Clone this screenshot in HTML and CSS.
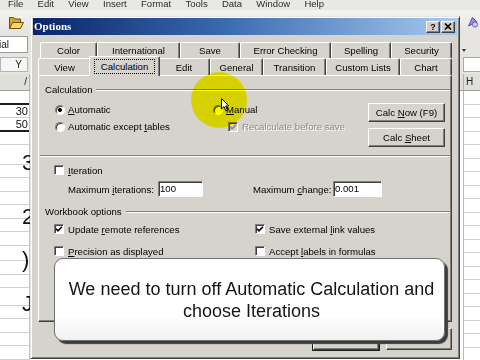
FILE: index.html
```html
<!DOCTYPE html>
<html lang="en">
<head>
<meta charset="utf-8">
<title>Options</title>
<link rel="stylesheet" href="styles.css">
</head>
<body>
<div class="screen">
  <div class="excel">
    <div class="menubar"><span>File</span><span>Edit</span><span>View</span><span>Insert</span><span>Format</span><span>Tools</span><span>Data</span><span>Window</span><span>Help</span></div>
    <div class="toolbar">
      <svg class="folder" width="17" height="16" viewBox="0 0 17 16">
        <path d="M1.5 3.5h4l1 1.5h6v9.5h-11z" fill="#d8a526" stroke="#6b4e0c"/>
        <path d="M1.5 14.5l3-6h11l-3 6z" fill="#f7d75e" stroke="#6b4e0c" stroke-linejoin="round"/>
        <path d="M10.5 1.5l1.5 1.5 3-2" fill="none" stroke="#fff6c0" stroke-width="1.4"/>
      </svg>
      <svg class="tb-icon" width="12" height="12" viewBox="0 0 12 12">
        <path d="M1.5 10 L5.5 1.5 L10 6 Z" fill="#9b8fe0" stroke="#5a4caa"/>
        <circle cx="8" cy="8.5" r="2.6" fill="#cfc6f6" stroke="#6a5cc0"/>
      </svg>
    </div>
    <div class="fmtbar"><div class="fontbox">Arial</div><div class="drop"></div></div>
    <div class="formulabar"><div class="namebox">Y</div><div class="fx"></div></div>
    <div class="colhead"><div class="ch-left">/</div><div class="ch-right">H</div></div>
    <div class="sheet">
      <div class="col-left">
        <div class="cell thick"></div>
        <div class="cell num">30</div>
        <div class="cell num thick">50</div>
        <div class="cell"></div>
        <div class="cell"><span class="big g3">3</span></div>
        <div class="cell"></div>
        <div class="cell"></div>
        <div class="cell"></div>
        <div class="cell"><span class="big g2">2</span></div>
        <div class="cell"></div>
        <div class="cell"></div>
        <div class="cell"><span class="big gp">)</span></div>
        <div class="cell"></div>
        <div class="cell"></div>
        <div class="cell"><span class="big gj">J</span></div>
        <div class="cell"></div>
        <div class="cell"></div>
        <div class="cell"></div>
        <div class="cell"></div>
        <div class="cell"></div>
      </div>
      <div class="col-right"></div>
    </div>
  </div>

  <div class="dialog">
    <div class="titlebar">
      <span class="title">Options</span>
      <span class="tbtn help">?</span>
      <span class="tbtn close"><svg width="8" height="7" viewBox="0 0 8 7"><path d="M1 0.5L7 6.5M7 0.5L1 6.5" stroke="#000" stroke-width="1.6"/></svg></span>
    </div>
    <div class="body">
      <div class="tabrow back">
        <div class="tab">Color</div>
        <div class="tab">International</div>
        <div class="tab">Save</div>
        <div class="tab">Error Checking</div>
        <div class="tab">Spelling</div>
        <div class="tab">Security</div>
      </div>
      <div class="tabrow front">
        <div class="tab">View</div>
        <div class="tab sel"><span class="focus">Calculation</span></div>
        <div class="tab">Edit</div>
        <div class="tab">General</div>
        <div class="tab">Transition</div>
        <div class="tab">Custom Lists</div>
        <div class="tab">Chart</div>
      </div>
      <div class="panel">
        <div class="group"><span>Calculation</span><i class="groove"></i></div>
        <div class="calc">
          <div class="calc-opts">
            <div class="opt"><span class="radio on"></span><span><u>A</u>utomatic</span></div>
            <div class="opt"><span class="radio"></span><span><u>M</u>anual</span></div>
            <div class="opt"><span class="radio"></span><span>Automatic except <u>t</u>ables</span></div>
            <div class="opt sub"><span class="chk dis"><svg width="8" height="8" viewBox="0 0 8 8"><path d="M1 3.8L3 5.8L7 1.8" fill="none" stroke="#8a8a8a" stroke-width="1.6"/></svg></span><span class="disabled">Recalculate before save</span></div>
          </div>
          <div class="calc-btns">
            <div class="btn"><span>Calc <u>N</u>ow (F9)</span></div>
            <div class="btn"><span>Calc <u>S</u>heet</span></div>
          </div>
        </div>
        <div class="sep"></div>
        <div class="row-chk"><span class="chk"></span><span><u>I</u>teration</span></div>
        <div class="maxrow">
          <span class="lbl1">Maximum <u>i</u>terations:</span>
          <span class="field f1">100</span>
          <span class="lbl2">Maximum <u>c</u>hange:</span>
          <span class="field f2">0.001</span>
        </div>
        <div class="group wbg"><span>Workbook options</span><i class="groove"></i></div>
        <div class="wb">
          <div class="opt"><span class="chk"><svg width="8" height="8" viewBox="0 0 8 8"><path d="M1 3.8L3 5.8L7 1.8" fill="none" stroke="#000" stroke-width="1.6"/></svg></span><span>Update <u>r</u>emote references</span></div>
          <div class="opt"><span class="chk"><svg width="8" height="8" viewBox="0 0 8 8"><path d="M1 3.8L3 5.8L7 1.8" fill="none" stroke="#000" stroke-width="1.6"/></svg></span><span>Save external <u>l</u>ink values</span></div>
          <div class="opt"><span class="chk"></span><span><u>P</u>recision as displayed</span></div>
          <div class="opt"><span class="chk"></span><span>Accept <u>l</u>abels in formulas</span></div>
        </div>
      </div>
      <div class="footer">
        <div class="btn big-btn default"><span>OK</span></div>
        <div class="btn big-btn"><span>Cancel</span></div>
      </div>
    </div>
  </div>

  <div class="highlight"></div>
  <svg class="cursor" width="9" height="14" viewBox="0 0 9 14">
    <path d="M0.5 0.5 L0.5 11 L3 8.6 L4.8 12.8 L6.4 12.1 L4.6 8 L7.8 8 Z" fill="#fff" stroke="#000" stroke-width="1" stroke-linejoin="round"/>
  </svg>
  <div class="callout">We need to turn off Automatic Calculation and<br>choose Iterations</div>
</div>
</body>
</html>
```

FILE: styles.css
```css
* { box-sizing: border-box; }
html, body { margin: 0; padding: 0; }
body {
  width: 480px;
  height: 360px;
  overflow: hidden;
  background: #d6d3cd;
  font-family: "Liberation Sans", Arial, sans-serif;
}
.screen { position: relative; width: 480px; height: 360px; overflow: hidden; }

/* ---------- Excel background ---------- */
.excel { display: flex; flex-direction: column; width: 480px; height: 360px; background: #ecebe8; }
.menubar {
  flex: none; height: 10px; display: flex; gap: 14.3px; padding: 0 8px;
  background: #e9e8e5; color: #2a2a2a; font-size: 9.5px; line-height: 11px; overflow: hidden;
}
.menubar span { margin-top: -2px; }
.toolbar {
  flex: none; height: 23px; display: flex; align-items: center; justify-content: space-between;
  padding: 0 1px 0 8px; background: linear-gradient(#f3f3f1, #e5e4e0);
}
.fmtbar { flex: none; height: 22px; display: flex; align-items: center; justify-content: space-between; background: #e6e5e1; }
.fontbox {
  margin-left: -14px; width: 42px; height: 17px; background: #fff; border: 1px solid #9a9a9a;
  padding-left: 2px; font-size: 10px; line-height: 15px; color: #222;
}
.drop {
  width: 0; height: 0; border-left: 2px solid transparent; border-right: 2px solid transparent;
  border-top: 3px solid #333; margin: 12px 14px 0 0;
}
.formulabar { flex: none; height: 19px; display: flex; align-items: center; justify-content: space-between; background: #e6e5e1; }
.namebox {
  width: 28px; height: 15px; background: #f6f6f6; border: 1px solid #b4b4b4; text-align: right;
  padding-right: 5px; font-size: 10px; line-height: 13px; color: #222;
}
.fx { width: 17px; height: 15px; background: #fff; border: 1px solid #a8a8a8; border-right: none; }
.colhead {
  flex: none; height: 17px; display: flex; justify-content: space-between; background: #e0dfdb;
  border-bottom: 1px solid #a0a0a0; font-size: 10px; line-height: 16px; color: #222;
}
.ch-left { width: 30px; text-align: right; padding-right: 2px; border-right: 1px solid #b0b0b0; }
.ch-right { width: 17px; padding-left: 2px; border-left: 1px solid #b0b0b0; }
.sheet { flex: 1; display: flex; justify-content: space-between; background: #fff; }
.col-left { width: 30px; border-right: 1px solid #c4c4c4; }
.cell {
  height: 13.5px; border-bottom: 1px solid #d0d0d0; font-size: 11px; line-height: 13px;
  color: #111; white-space: nowrap;
}
.cell.num { text-align: right; padding-right: 1px; }
.cell.thick { border-bottom: 2px solid #1c1c1c; }
.big { display: block; margin-left: 22px; font-size: 22px; line-height: 24px; color: #111; }
.g3 { margin-top: 6px; }
.g2 { margin-top: 0; }
.gp { margin-top: 2px; }
.gj { margin-top: 4px; }
.col-right {
  width: 17px; border-left: 1px solid #b8b8b8;
  background: repeating-linear-gradient(to bottom, #fff 0 12.5px, #d0d0d0 12.5px 13.5px);
}

/* ---------- Dialog window ---------- */
.dialog {
  position: absolute; left: 30px; top: 16px; width: 430px; height: 343px;
  background: #d6d3cd;
  border: 1px solid; border-color: #e8e6e2 #404040 #404040 #e8e6e2;
  box-shadow: inset 1px 1px #fff, inset -1px -1px #808080;
  padding: 1px 2px 2px 2px;
  display: flex; flex-direction: column;
  font-size: 9.6px; line-height: 11px; color: #000;
}
.titlebar {
  flex: none; height: 17px; display: flex; align-items: center; padding: 0 2px 0 1px;
  background: linear-gradient(to right, #0a246a, #3a6ab0 45%, #a6caf0);
}
.title { flex: 1; color: #fff; font: bold 11px/17px "Liberation Serif", "Times New Roman", serif; }
.tbtn {
  width: 14px; height: 12px; background: #d4d0c8;
  border: 1px solid; border-color: #fff #404040 #404040 #fff; box-shadow: inset -1px -1px #808080;
  display: flex; align-items: center; justify-content: center;
  font: bold 9px/10px "Liberation Sans", Arial, sans-serif; color: #000;
}
.tbtn.help { margin-right: 1px; }

.body { flex: 1; display: flex; flex-direction: column; padding: 7px 5px 0 5px; }
.tabrow { display: grid; }
.tabrow.back { height: 16px; margin-left: 2px; grid-template-columns: 57px 83px 60px 91px 60px 61px; }
.tabrow.front { height: 17px; grid-template-columns: 53px 67px 52px 53px 63px 74px 52px; }
.tab {
  display: flex; align-items: center; justify-content: center; white-space: nowrap;
  background: #d6d3cd;
  border-left: 1px solid #fff; border-top: 1px solid #fff; border-right: 1px solid #404040;
  box-shadow: inset -1px 0 #808080; border-radius: 2px 2px 0 0;
}
.tab.sel { margin: -2px -2px -1px; position: relative; z-index: 1; }
.focus { outline: 1px dotted #000; padding: 1px 6px; }

.panel {
  flex: none; height: 247px; padding: 0 1px;
  border: 1px solid; border-color: #fff #404040 #404040 #fff; box-shadow: inset -1px -1px #808080;
  display: flex; flex-direction: column;
}
.group { display: flex; align-items: center; height: 11px; margin-top: 8px; padding-left: 5px; white-space: nowrap; }
.group.wbg { margin-top: 9px; }
.groove { flex: 1; height: 2px; margin-left: 4px; border-top: 1px solid #808080; border-bottom: 1px solid #fff; }

.calc { display: flex; padding-top: 6px; }
.calc-opts { display: grid; grid-template-columns: 158px 155px; grid-auto-rows: 17px; padding-left: 15px; align-content: start; }
.opt { display: flex; align-items: center; white-space: nowrap; }
.opt.sub { padding-left: 15px; }
.radio {
  flex: none; width: 10px; height: 10px; margin-right: 3px; border-radius: 50%;
  border: 1px solid; border-color: #808080 #fff #fff #808080; box-shadow: inset 1px 1px #404040;
  background: #fff;
}
.radio.on { background: radial-gradient(circle, #000 0 1.7px, #fff 2.3px); }
.chk {
  flex: none; width: 10px; height: 10px; margin-right: 4px;
  border: 1px solid; border-color: #808080 #fff #fff #808080; box-shadow: inset 1px 1px #404040;
  background: #fff; display: flex; align-items: center; justify-content: center;
}
.chk.dis { background: #d6d3cd; }
.disabled { color: #8a8a8a; text-shadow: 1px 1px 0 #fff; }

.calc-btns { display: flex; flex-direction: column; gap: 6px; margin-top: 2px; }
.btn {
  display: flex; align-items: center; justify-content: center; white-space: nowrap;
  width: 77px; height: 19px; background: #d6d3cd;
  border: 1px solid; border-color: #fff #404040 #404040 #fff; box-shadow: inset -1px -1px #808080;
}
.sep { margin-top: 8px; height: 2px; border-top: 1px solid #808080; border-bottom: 1px solid #fff; }
.row-chk { display: flex; align-items: center; height: 14px; margin-top: 6px; padding-left: 14px; }
.maxrow { display: flex; align-items: center; height: 16px; margin-top: 4px; padding-left: 28px; white-space: nowrap; }
.lbl1 { width: 90px; }
.lbl2 { width: 80px; margin-left: 50px; }
.field {
  height: 16px; background: #fff; padding-left: 1px; line-height: 14px;
  border: 1px solid; border-color: #808080 #fff #fff #808080; box-shadow: inset 1px 1px #404040;
}
.f1 { width: 45px; }
.f2 { width: 49px; }
.wb { display: grid; grid-template-columns: 201px 1fr; grid-auto-rows: 14px; row-gap: 8px; margin-top: 5px; padding-left: 14px; }

.footer { display: flex; justify-content: flex-end; gap: 7px; margin-top: 6px; }
.big-btn { width: 66px; height: 22px; }
.default { outline: 1px solid #202020; }

/* ---------- Overlays ---------- */
.highlight {
  position: absolute; left: 191px; top: 72px; width: 56px; height: 56px; border-radius: 50%;
  mix-blend-mode: multiply;
  background: radial-gradient(circle, rgb(255,252,0) 0 64%, rgba(255,252,0,0.8) 84%, rgba(255,252,0,0) 100%);
}
.cursor { position: absolute; left: 221px; top: 98px; }
.callout {
  position: absolute; left: 54px; top: 258px; width: 391px; height: 83px;
  background: linear-gradient(#fff 0, #fff 70%, #f1f1f1 100%);
  border: 1px solid #707070; border-radius: 9px;
  box-shadow: 3px 3px 1px #3c3c3c;
  display: flex; align-items: center; justify-content: center; text-align: center;
  padding-left: 4px;
  font: 18px/22px "Liberation Sans", Arial, sans-serif; color: #151515;
}
```
